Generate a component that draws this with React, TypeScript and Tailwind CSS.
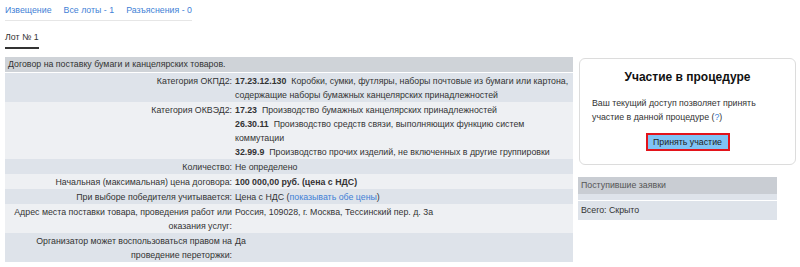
import type { ReactNode } from 'react'

type Row = { label: ReactNode; value: ReactNode }

const rows: Row[] = [
  {
    label: 'Категория ОКПД2:',
    value: (
      <>
        <b>17.23.12.130</b>&nbsp; Коробки, сумки, футляры, наборы почтовые из бумаги или картона, содержащие наборы
        бумажных канцелярских принадлежностей
      </>
    ),
  },
  {
    label: 'Категория ОКВЭД2:',
    value: (
      <>
        <div>
          <b>17.23</b>&nbsp; Производство бумажных канцелярских принадлежностей
        </div>
        <div>
          <b>26.30.11</b>&nbsp; Производство средств связи, выполняющих функцию систем коммутации
        </div>
        <div>
          <b>32.99.9</b>&nbsp; Производство прочих изделий, не включенных в другие группировки
        </div>
      </>
    ),
  },
  { label: 'Количество:', value: 'Не определено' },
  { label: 'Начальная (максимальная) цена договора:', value: <b>100 000,00 руб. (цена с НДС)</b> },
  {
    label: 'При выборе победителя учитывается:',
    value: (
      <>
        Цена с НДС (<span className="text-[#3f7fd6]">показывать обе цены</span>)
      </>
    ),
  },
  {
    label: 'Адрес места поставки товара, проведения работ или оказания услуг:',
    value: 'Россия, 109028, г. Москва, Тессинский пер. д. 3а',
  },
  { label: 'Организатор может воспользоваться правом на проведение переторжки:', value: 'Да' },
]

export default function App() {
  return (
    <div className="w-[800px] h-[267px] overflow-hidden bg-white text-[8.8px] leading-[13px] text-[#333] font-['Liberation_Sans',Arial,sans-serif]">
      <div className="pl-[5px] pt-[4px]">
        <div className="flex gap-[12px] w-[187px] border-b border-[#e6e6e6] pb-[3px] text-[#3f7fd6] whitespace-nowrap">
          <span>Извещение</span>
          <span>Все лоты - 1</span>
          <span>Разъяснения - 0</span>
        </div>
        <div className="mt-[10px] inline-block border-b-2 border-[#333] pb-[3px]">Лот № 1</div>
      </div>

      <div className="flex gap-[5px] pl-[5px] mt-[8px]">
        <div className="w-[568px]">
          <div className="bg-[#cfd3d8] px-[3px] py-px mb-px">Договор на поставку бумаги и канцелярских товаров.</div>
          {rows.map((r, i) => (
            <div
              key={i}
              className={`flex pt-px leading-[14px] ${i % 2 === 0 ? 'bg-[#dee3ea]' : 'bg-[#eef0f3]'}`}
            >
              <div className="w-[230px] shrink-0 pr-[3px] text-right">{r.label}</div>
              <div className="flex-1">{r.value}</div>
            </div>
          ))}
        </div>

        <div className="w-[218px]">
          <div className="ml-px mt-px border border-[#dcdcdc] rounded-[6px] h-[107px] px-[12px] pt-[10px]">
            <div className="text-center text-[12px] leading-[16px] font-bold text-[#111]">Участие в процедуре</div>
            <div className="mt-[11px] leading-[14px]">
              Ваш текущий доступ позволяет принять
              <br />
              участие в данной процедуре (<span className="text-[#3f7fd6]">?</span>)
            </div>
            <div className="flex justify-center mt-[9px]">
              <div className="w-[84px] h-[18px] flex items-center justify-center bg-[#7fc3f5] border-2 border-[#e3141b] text-[#222]">
                Принять участие
              </div>
            </div>
          </div>
          <div className="mt-[12px] w-[199px]">
            <div className="bg-[#c9cdd3] text-[#555] px-[3px] py-[2px]">Поступившие заявки</div>
            <div className="bg-[#dee3ea] h-[6px] mb-px" />
            <div className="bg-[#dee3ea] px-[3px] py-[3px]">Всего: Скрыто</div>
          </div>
        </div>
      </div>
    </div>
  )
}
